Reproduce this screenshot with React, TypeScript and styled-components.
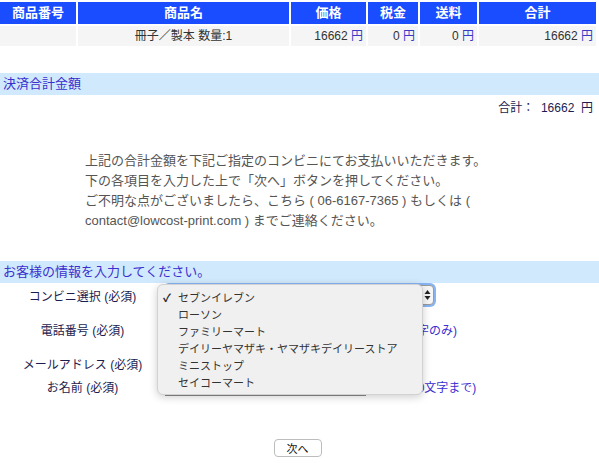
import styled, { createGlobalStyle } from "styled-components";

const GlobalStyle = createGlobalStyle`
  html, body {
    margin: 0;
    padding: 0;
    background: #ffffff;
  }
  body {
    font-family: "Liberation Sans", "Noto Sans CJK JP", sans-serif;
    font-size: 12px;
    color: #222;
  }
`;

const Page = styled.div`
  width: 599px;
  position: relative;
`;

const OrderTable = styled.div`
  display: grid;
  grid-template-columns: 76px 211px 75px 50px 57px 117px;
  column-gap: 2px;
  row-gap: 2px;
  padding-top: 2px;
`;

const HeadCell = styled.div`
  background: #1a4dff;
  color: #ffffff;
  font-weight: bold;
  font-size: 13px;
  height: 22px;
  line-height: 22px;
  text-align: center;
`;

const BodyCell = styled.div<{ $align?: "left" | "center" | "right" }>`
  background: #f5f5f5;
  height: 20px;
  line-height: 20px;
  font-size: 12px;
  color: #333;
  text-align: ${(p) => p.$align || "left"};
  padding: 0 3px;
  white-space: nowrap;
`;

const Yen = styled.span`
  color: #3b38c8;
`;

const Band = styled.div<{ $top: number }>`
  margin-top: ${(p) => p.$top}px;
  background: #d1e9fc;
  color: #3a2fcf;
  font-size: 13px;
  height: 22px;
  line-height: 22px;
  padding-left: 3px;
`;

const TotalLine = styled.div`
  text-align: right;
  padding-right: 6px;
  margin-top: 5px;
  height: 16px;
  line-height: 16px;
  font-size: 12px;
  color: #1c1c50;
  white-space: pre;
`;

const Notice = styled.div`
  margin-top: 35px;
  padding-left: 85px;
  font-size: 13px;
  line-height: 20px;
  color: #555;
`;

const Form = styled.div`
  display: grid;
  grid-template-columns: 165px 1fr;
`;

const FormRow = styled.div<{ $h: number }>`
  display: contents;
  & > * {
    height: ${(p) => p.$h}px;
  }
`;

const Label = styled.div`
  display: flex;
  align-items: center;
  justify-content: center;
  font-size: 12px;
  color: #1c1c50;
  white-space: nowrap;
`;

const Field = styled.div<{ $gap?: number }>`
  display: flex;
  align-items: center;
  gap: ${(p) => p.$gap ?? 8}px;
  font-size: 12px;
  color: #3a2fcf;
  white-space: nowrap;
`;

const SelectBox = styled.div`
  width: 266px;
  height: 18px;
  border: 1px solid #9a9a9a;
  border-radius: 4px;
  background: #f6f6f6;
  box-shadow: 0 0 0 2px #86b4f5;
  display: flex;
  justify-content: flex-end;
  align-items: center;
  padding-right: 1px;
`;

const Stepper = styled.div`
  width: 9px;
  height: 14px;
  display: flex;
  align-items: center;
  justify-content: center;
`;

const TextInput = styled.div<{ $w: number }>`
  width: ${(p) => p.$w}px;
  height: 18px;
  border: 1px solid #8a8a8a;
  border-top-color: #6d6d6d;
  background: #fff;
`;

const ButtonRow = styled.div`
  display: flex;
  justify-content: center;
  margin-top: 42px;
  padding-right: 4px;
`;

const NextButton = styled.button`
  width: 48px;
  height: 18px;
  border: 1px solid #bdbdbd;
  border-radius: 4px;
  background: #ffffff;
  font-family: "Noto Sans CJK JP", sans-serif;
  font-size: 11px;
  color: #111;
  padding: 0;
  line-height: 16px;
`;

const Popup = styled.div`
  position: absolute;
  left: 157px;
  top: 284px;
  width: 266px;
  padding: 4px 0 3px;
  background: #f0f0f0;
  border: 1px solid #d2d2d2;
  border-radius: 6px;
  box-shadow: 0 2px 8px rgba(0, 0, 0, 0.2);
  box-sizing: border-box;
`;

const PopupItem = styled.div`
  position: relative;
  height: 17px;
  line-height: 17px;
  padding-left: 20px;
  font-family: "Noto Sans CJK JP", sans-serif;
  font-size: 11px;
  color: #333;
  white-space: nowrap;
`;

const Check = styled.span`
  position: absolute;
  left: 5px;
  top: 0;
  font-size: 11px;
  font-weight: bold;
  color: #222;
`;

const headers = ["商品番号", "商品名", "価格", "税金", "送料", "合計"];

const stores = [
  "セブンイレブン",
  "ローソン",
  "ファミリーマート",
  "デイリーヤマザキ・ヤマザキデイリーストア",
  "ミニストップ",
  "セイコーマート",
];

export default function App() {
  return (
    <Page>
      <GlobalStyle />
      <OrderTable>
        {headers.map((h) => (
          <HeadCell key={h}>{h}</HeadCell>
        ))}
        <BodyCell />
        <BodyCell $align="center">冊子／製本 数量:1</BodyCell>
        <BodyCell $align="right">
          16662 <Yen>円</Yen>
        </BodyCell>
        <BodyCell $align="right">
          0 <Yen>円</Yen>
        </BodyCell>
        <BodyCell $align="right">
          0 <Yen>円</Yen>
        </BodyCell>
        <BodyCell $align="right">
          16662 <Yen>円</Yen>
        </BodyCell>
      </OrderTable>

      <Band $top={27}>決済合計金額</Band>
      <TotalLine>{"合計：  16662  円"}</TotalLine>

      <Notice>
        上記の合計金額を下記ご指定のコンビニにてお支払いいただきます。
        <br />
        下の各項目を入力した上で「次へ」ボタンを押してください。
        <br />
        ご不明な点がございましたら、こちら ( 06-6167-7365 ) もしくは (
        <br />
        contact@lowcost-print.com ) までご連絡ください。
      </Notice>

      <Band $top={30}>お客様の情報を入力してください。</Band>

      <Form>
        <FormRow $h={24}>
          <Label>コンビニ選択 (必須)</Label>
          <Field>
            <SelectBox>
              <Stepper>
                <svg width="7" height="12" viewBox="0 0 7 12">
                  <path d="M3.5 1 L6.5 5 H0.5 Z" fill="#222" />
                  <path d="M3.5 11 L6.5 7 H0.5 Z" fill="#222" />
                </svg>
              </Stepper>
            </SelectBox>
          </Field>
        </FormRow>
        <FormRow $h={44}>
          <Label>電話番号 (必須)</Label>
          <Field $gap={11}>
            <TextInput $w={199} />
            (半角数字のみ)
          </Field>
        </FormRow>
        <FormRow $h={24}>
          <Label>メールアドレス (必須)</Label>
          <Field>
            <TextInput $w={240} />
          </Field>
        </FormRow>
        <FormRow $h={22}>
          <Label>お名前 (必須)</Label>
          <Field $gap={17}>
            <TextInput $w={199} />
            (全角20文字まで)
          </Field>
        </FormRow>
      </Form>

      <ButtonRow>
        <NextButton type="button">次へ</NextButton>
      </ButtonRow>

      <Popup>
        {stores.map((s, i) => (
          <PopupItem key={s}>
            {i === 0 && <Check>✓</Check>}
            {s}
          </PopupItem>
        ))}
      </Popup>
    </Page>
  );
}
